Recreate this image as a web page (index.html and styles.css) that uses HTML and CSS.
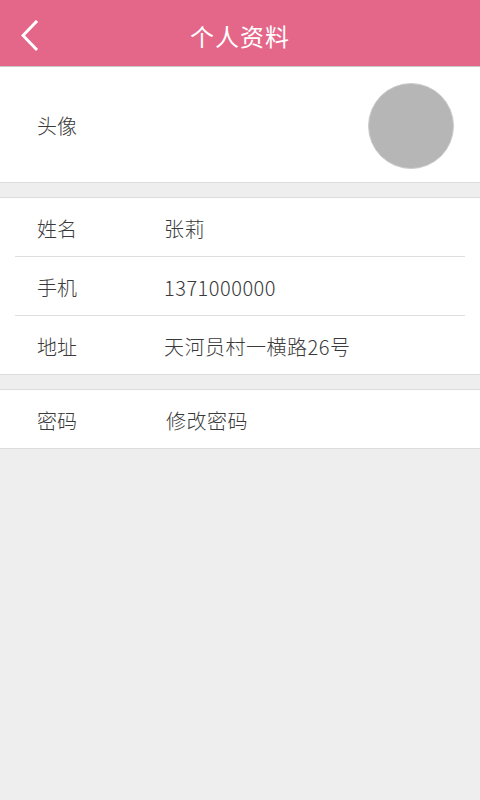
FILE: index.html
```html
<!DOCTYPE html>
<html lang="zh">
<head>
<meta charset="utf-8">
<link rel="stylesheet" href="styles.css">
</head>
<body>
<header class="topbar">
  <svg class="back" width="20" height="32" viewBox="0 0 20 32"><polyline points="15,2 2,15.5 15,29" fill="none" stroke="#fff" stroke-width="3" stroke-linecap="square"/></svg>
  <h1 class="title">个人资料</h1>
</header>
<section class="avatar-row">
  <span class="label">头像</span>
  <div class="avatar"></div>
</section>
<section class="card">
  <div class="row"><span class="label">姓名</span><span class="value">张莉</span></div>
  <div class="divider"></div>
  <div class="row"><span class="label">手机</span><span class="value">1371000000</span></div>
  <div class="divider"></div>
  <div class="row"><span class="label">地址</span><span class="value">天河员村一横路26号</span></div>
</section>
<section class="card">
  <div class="row"><span class="label">密码</span><span class="value pw">修改密码</span></div>
</section>
</body>
</html>
```
FILE: styles.css
```css
* { box-sizing: border-box; }
html, body { margin: 0; padding: 0; }
body {
  background: #eeeeee;
  font-family: "Noto Sans CJK SC", "Noto Sans", sans-serif;
  font-weight: 300;
  color: #3a3a3a;
  width: 480px;
  min-height: 800px;
}
.topbar {
  height: 67px;
  background: #e4678a;
  border-bottom: 1px solid #c9c9c9;
  display: flex;
  align-items: center;
  justify-content: center;
  position: relative;
}
.back {
  position: absolute;
  left: 21px;
  top: 20px;
}
.title {
  margin: 0;
  font-size: 24px;
  letter-spacing: 1px;
  font-weight: normal;
  color: #fff;
  line-height: 1;
  padding-top: 5px;
}
.avatar-row {
  height: 116px;
  background: #fff;
  border-bottom: 1px solid #dcdcdc;
  display: flex;
  align-items: center;
  justify-content: space-between;
  padding: 2px 26px 0 37px;
}
.avatar {
  width: 86px;
  height: 86px;
  border-radius: 50%;
  background: #b6b6b6;
  border: 1px solid #cdcdcd;
}
.label {
  font-size: 20px;
  width: 127px;
  flex: none;
}
.card {
  margin-top: 14px;
  background: #fff;
  border-top: 1px solid #dcdcdc;
  border-bottom: 1px solid #dcdcdc;
}
.row {
  height: 58px;
  display: flex;
  align-items: center;
  padding: 2px 0 0 37px;
  font-size: 20px;
}
.value { font-size: 20px; letter-spacing: 0.5px; }
.value.pw { margin-left: 2px; }
.divider {
  height: 1px;
  background: #dedede;
  margin: 0 15px;
}
```
